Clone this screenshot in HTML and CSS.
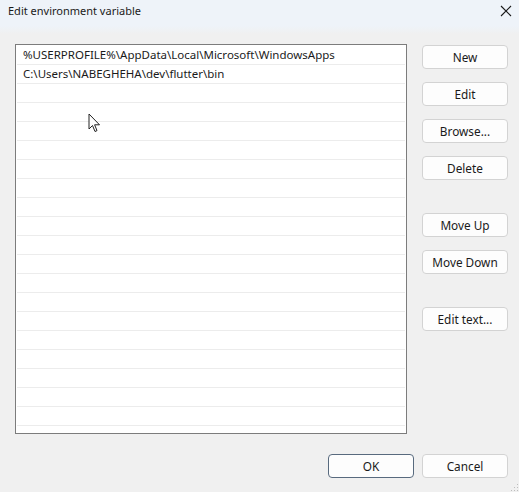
FILE: index.html
```html
<!DOCTYPE html>
<html lang="en">
<head>
    <meta charset="UTF-8">
    <title>Edit environment variable</title>
    <link rel="stylesheet" href="styles.css">
</head>
<body>
    <div class="dialog">
        <div class="titlebar">
            <span class="title">Edit environment variable</span>
            <svg class="close" width="12" height="12" viewBox="0 0 12 12">
                <path d="M1 1 L11 11 M11 1 L1 11" stroke="#1a1a1a" stroke-width="1.1" fill="none"/>
            </svg>
        </div>

        <div class="content">
            <div class="path-list">
                <div class="row">%USERPROFILE%\AppData\Local\Microsoft\WindowsApps</div>
                <div class="row">C:\Users\NABEGHEHA\dev\flutter\bin</div>
                <div class="row"></div>
                <div class="row"></div>
                <div class="row"></div>
                <div class="row"></div>
                <div class="row"></div>
                <div class="row"></div>
                <div class="row"></div>
                <div class="row"></div>
                <div class="row"></div>
                <div class="row"></div>
                <div class="row"></div>
                <div class="row"></div>
                <div class="row"></div>
                <div class="row"></div>
                <div class="row"></div>
                <div class="row"></div>
                <div class="row"></div>
                <div class="row"></div>

                <!-- mouse pointer -->
                <svg class="cursor" width="14" height="21" viewBox="0 0 14 21">
                    <path d="M1 1 L1 16 L4.5 12.5 L7 18.5 L9 17.6 L6.6 11.8 L11.5 11.8 Z" fill="#fff" stroke="#222" stroke-width="1" stroke-linejoin="round"/>
                </svg>
            </div>

            <div class="side-buttons">
                <button class="btn">New</button>
                <button class="btn gap-s">Edit</button>
                <button class="btn gap-s">Browse...</button>
                <button class="btn gap-s">Delete</button>
                <button class="btn gap-l">Move Up</button>
                <button class="btn gap-s">Move Down</button>
                <button class="btn gap-l">Edit text...</button>
            </div>
        </div>

        <div class="footer">
            <button class="btn default">OK</button>
            <button class="btn">Cancel</button>
        </div>

        <div class="grip"></div>
    </div>
</body>
</html>
```

FILE: styles.css
```css
/* Page */
body {
    margin: 0;
    font-family: "Noto Sans", "Open Sans", sans-serif;
    font-size: 12px;
    color: #1a1a1a;
    background-color: #f0f0f0;
    overflow: hidden;
}

.dialog {
    position: relative;
    width: 519px;
    height: 492px;
    background: linear-gradient(#eef3f9 0, #eef3f9 26px, #f0f0f0 34px);
}

/* Title bar */
.titlebar {
    height: 20px;
    display: flex;
    align-items: center;
    justify-content: space-between;
    padding: 0 7px 0 8px;
}

.title {
    font-size: 11px;
}

.close {
    margin-top: 1px;
}

/* List and side buttons */
.content {
    display: flex;
    gap: 15px;
    padding: 24px 0 0 15px;
}

.path-list {
    position: relative;
    box-sizing: border-box;
    width: 392px;
    height: 390px;
    border: 1px solid #7c7c7c;
    background-color: #fff;
    padding: 1px 1px 0;
    overflow: hidden;
}

.row {
    box-sizing: border-box;
    height: 19px;
    line-height: 18px;
    padding-left: 6px;
    font-size: 11.5px;
    border-bottom: 1px solid #ececec;
    white-space: nowrap;
}

.cursor {
    position: absolute;
    left: 72px;
    top: 68px;
}

.side-buttons {
    display: flex;
    flex-direction: column;
    width: 86px;
    padding-top: 1px;
}

/* Buttons */
.btn {
    box-sizing: border-box;
    width: 86px;
    height: 24px;
    padding: 0;
    font-family: "Noto Sans", "Open Sans", sans-serif;
    font-size: 11.8px;
    color: #1a1a1a;
    background-color: #fdfdfd;
    border: 1px solid #d3d3d3;
    border-radius: 4px;
}

.gap-s {
    margin-top: 13px;
}

.gap-l {
    margin-top: 33px;
}

.btn.default {
    border-color: #586a7e;
}

/* Bottom row */
.footer {
    display: flex;
    justify-content: flex-end;
    gap: 8px;
    padding-right: 11px;
    margin-top: 20px;
}

.grip {
    position: absolute;
    right: 1px;
    bottom: 1px;
    width: 8px;
    height: 8px;
    background: radial-gradient(circle, #bdbdbd 0.8px, transparent 1px) 0 0 / 3px 3px;
    clip-path: polygon(100% 0, 100% 100%, 0 100%);
}
```
